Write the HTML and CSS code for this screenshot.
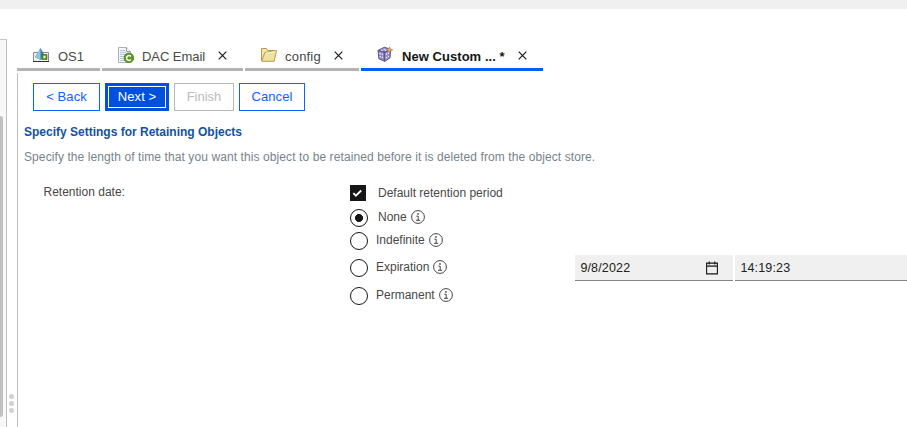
FILE: index.html
```html
<!DOCTYPE html>
<html lang="en">
<head>
<meta charset="utf-8">
<title>New Custom Object</title>
<link rel="stylesheet" href="styles.css">
</head>
<body>
<svg class="defs" aria-hidden="true">
  <symbol id="close" viewBox="0 0 9 9"><path d="M.7.7l7.6 7.6M8.3.7L.7 8.3" fill="none" stroke="#161616" stroke-width="1.15"/></symbol>
  <symbol id="info" viewBox="0 0 14 14"><g fill="none" stroke="#444" stroke-width="1"><circle cx="7" cy="7" r="6.4"/><path d="M5.4 6.2h1.8v4M5 10.3h4.2"/></g><circle cx="7" cy="3.9" r=".85" fill="#444"/></symbol>
</svg>
<header class="topbar"></header>
<div class="workspace">
  <aside class="tree"><div class="thumb"></div></aside>
  <div class="splitter"><i></i><i></i><i></i></div>
  <main class="main">
    <nav class="tabs">
      <div class="tab tab-os">
        <svg class="icon" viewBox="0 0 16 16"><path d="M.5 5.5h15v9H.5z" fill="#eef0f2" stroke="#8a8a8a"/><path d="M0 14.5h16" stroke="#333"/><path d="M7.5 1l5 9-5 3L2 10z" fill="#3a7fa6"/><path d="M7.5 1v12L2 10z" fill="#8fc6dd"/><path d="M9 7.5h5v5H9z" fill="#5f9022" stroke="#3f6a12" stroke-width=".6"/><path d="M10.4 8.8h2.2v1.6l-1 .9h-1.2z" fill="#e6f2cc"/></svg>
        <span>OS1</span>
      </div>
      <div class="tab tab-mail">
        <svg class="icon" viewBox="0 0 16 16"><path d="M.5.5h8l4 4v11H.5z" fill="#f3f6fa" stroke="#a9b0b8"/><path d="M8.5.5v4h4" fill="#fff" stroke="#969696"/><path d="M2 3.5h5M2 5.5h6M2 7.5h6M2 9.5h4M2 11.5h4M2 13.5h5" stroke="#b4c6df"/><circle cx="10.9" cy="10.9" r="4.9" fill="#5c981b" stroke="#407611" stroke-width=".6"/><path d="M12.9 9.5a2.4 2.4 0 1 0 0 3" fill="none" stroke="#fff" stroke-width="1.5"/></svg>
        <span>DAC Email</span><svg class="close"><use href="#close"/></svg>
      </div>
      <div class="tab tab-config">
        <svg class="icon" viewBox="0 0 16 16"><path d="M.5 13.5v-12h5l1 2h7v3" fill="#f5e8ad" stroke="#b59a4e"/><path d="M.7 14.3l3.1-8.8 11.7-2-2.3 10.8z" fill="#eee2a0" stroke="#b49b50"/><path d="M4.5 6.3l10-1.7" stroke="#fff8d0"/></svg>
        <span>config</span><svg class="close"><use href="#close"/></svg>
      </div>
      <div class="tab tab-custom active">
        <svg class="icon" viewBox="0 0 16 16"><path d="M7.5 1.2l6.3 2.3-.8 8.3-5.2 3.6-5.9-2.6L1 4.4z" fill="#9189bd" stroke="#5d5496"/><path d="M1 4.4l6.4 1.9 6.2-2.6M7.4 6.3v9" fill="none" stroke="#5d5496" stroke-width="1.2"/><path d="M3 6.8v1.6M5.2 7.4V9M3.2 10v1.6M5.3 10.7v1.6M9.4 7.2v1.7M11.5 6.3v1.6M9.3 10.7v1.7M11.4 9.7v1.6M4 4l1.6.5M6.5 2.9l1.6.5M8 4.5l1.5-.5" fill="none" stroke="#f0edfb" stroke-width="1.1"/><path d="M12.4.9l.8 2.1 2.6.8-2.6.9-.8 2.2-.8-2.2-2.1-.9 2.1-.8z" fill="#ecbf6d" stroke="#b9833a" stroke-width=".7"/></svg>
        <span>New Custom ... *</span><svg class="close"><use href="#close"/></svg>
      </div>
    </nav>
    <section class="pane">
      <div class="actions">
        <button class="btn back">&lt; Back</button>
        <button class="btn primary">Next &gt;</button>
        <button class="btn finish" disabled>Finish</button>
        <button class="btn cancel">Cancel</button>
      </div>
      <h1 class="title">Specify Settings for Retaining Objects</h1>
      <p class="description">Specify the length of time that you want this object to be retained before it is deleted from the object store.</p>
      <div class="form">
        <div class="field-label">Retention date:</div>
        <div class="options">
          <label class="option default"><svg class="check" viewBox="0 0 16 16"><path d="M0 0h16v16H0z" fill="#161616"/><path d="M3.3 8.1l2.6 2.6 5.3-5.2" fill="none" stroke="#fff" stroke-width="1.8"/></svg><span>Default retention period</span></label>
          <label class="option none"><b class="radio selected"></b><span>None</span><svg class="info"><use href="#info"/></svg></label>
          <label class="option indefinite"><b class="radio"></b><span>Indefinite</span><svg class="info"><use href="#info"/></svg></label>
          <div class="option expiration"><b class="radio"></b><span>Expiration</span><svg class="info"><use href="#info"/></svg>
            <div class="inputs">
              <div class="input date"><span>9/8/2022</span><svg class="calendar" viewBox="0 0 12 14"><path d="M.6 2.1h10.8v10.8H.6zM.6 5.1h10.8M3.2.5v3M8.8.5v3" fill="none" stroke="#161616" stroke-width="1.1"/></svg></div>
              <div class="input time"><span>14:19:23</span></div>
            </div>
          </div>
          <label class="option permanent"><b class="radio"></b><span>Permanent</span><svg class="info"><use href="#info"/></svg></label>
        </div>
      </div>
    </section>
  </main>
</div>
</body>
</html>
```
FILE: styles.css
```css
* { box-sizing: border-box; }
body { margin: 0; height: 427px; overflow: hidden; background: #fff; color: #484848; font: 12px/16px "Liberation Sans", Arial, sans-serif; }
.defs { display: none; }
svg { display: block; flex: none; }
.topbar { height: 9px; background: #f0f0f0; }
.workspace { display: flex; height: 418px; padding-top: 30px; }
.tree { width: 7px; padding-top: 76px; border-top: 1px solid #c6c6c6; border-right: 1px solid #c0c0c0; background: #f8f8f8; }
.thumb { width: 3px; height: 301px; background: #c0c0c0; border-radius: 0 3px 3px 0; }
.splitter { width: 10px; display: flex; flex-direction: column; align-items: center; gap: 2px; padding-top: 355px; }
.splitter i { width: 5px; height: 5px; margin-left: -1px; border-radius: 50%; background: #d1d1d4; }
.main { flex: 1; min-width: 0; display: flex; flex-direction: column; }
.tabs { display: flex; gap: 2px; height: 32px; flex: none; }
.tab { display: flex; align-items: flex-start; padding-top: 8px; border-bottom: 3px solid #b3b3b3; font-size: 13px; white-space: nowrap; }
.tab .icon { width: 16px; height: 16px; }
.tab span { margin-top: 2px; }
.tab .close { width: 9px; height: 9px; margin-top: 4px; }
.tab-os { width: 83px; padding-left: 16px; }
.tab-os span { margin-left: 9px; }
.tab-mail { width: 141px; padding-left: 16px; }
.tab-mail span { width: 76px; margin-left: 8px; letter-spacing: -.05px; }
.tab-config { width: 114px; padding-left: 16px; }
.tab-config span { width: 49px; margin-left: 8px; letter-spacing: .2px; }
.tab-custom { width: 182px; padding: 7px 0 0 16px; border-color: #0060ff; color: #161616; font-weight: bold; }
.tab-custom span { width: 116px; margin: 3px 0 0 9px; letter-spacing: .05px; }
.tab-custom .close { margin-top: 5px; }
.pane { flex: 1; margin-top: 2px; border-left: 1px solid #c0c0c0; }
.actions { display: flex; gap: 5px; padding: 10px 0 0 15px; }
.btn { height: 28px; padding: 0; border: 1px solid #0f62fe; background: #fff; color: #0f62fe; font: 13px/16px "Liberation Sans", Arial, sans-serif; }
.back { width: 67px; letter-spacing: .1px; }
.primary { width: 64px; border: 3px solid #0050e0; background: #0050e0; box-shadow: inset 0 0 0 1px #fff; color: #fff; letter-spacing: .1px; }
.finish { width: 60px; border-color: #b8b8b8; color: #bbb; }
.cancel { width: 66px; letter-spacing: .05px; }
.title { margin: 13px 0 0 6px; color: #1252a3; font-size: 12px; line-height: 16px; }
.description { margin: 9px 0 0 6px; color: #77838b; white-space: nowrap; letter-spacing: .092px; }
.form { display: flex; margin-top: 19px; padding-left: 25.5px; }
.field-label { width: 306.5px; flex: none; }
.options { flex: 1; display: grid; grid-template-rows: 24px 24px 25px 30px 27px; align-items: start; }
.option { display: flex; align-items: flex-start; white-space: nowrap; }
.check { width: 16px; height: 16px; }
.radio { width: 18px; height: 18px; flex: none; border: 1px solid #161616; border-radius: 50%; }
.selected { background: radial-gradient(circle, #161616 0 3.7px, transparent 4.3px); }
.info { width: 14px; height: 14px; margin: 1px 0 0 4px; }
.default { padding-top: 1px; }
.default span { margin-left: 12px; }
.none { padding-top: 1px; }
.none span { margin-left: 10px; }
.indefinite span, .expiration span, .permanent span { margin-left: 8px; }
.expiration { padding-top: 2px; }
.inputs { display: flex; gap: 2px; flex: 1; margin: -4px 0 0 128px; }
.input { height: 26px; display: flex; align-items: center; background: #f0f0f0; border-bottom: 1px solid #858585; color: #222; font-size: 12.5px; letter-spacing: .15px; }
.input span { margin: 1px 0 0 5px; }
.date { width: 158px; }
.calendar { width: 12px; height: 14px; margin-left: auto; margin-right: 15px; }
.time { flex: 1; }
```
